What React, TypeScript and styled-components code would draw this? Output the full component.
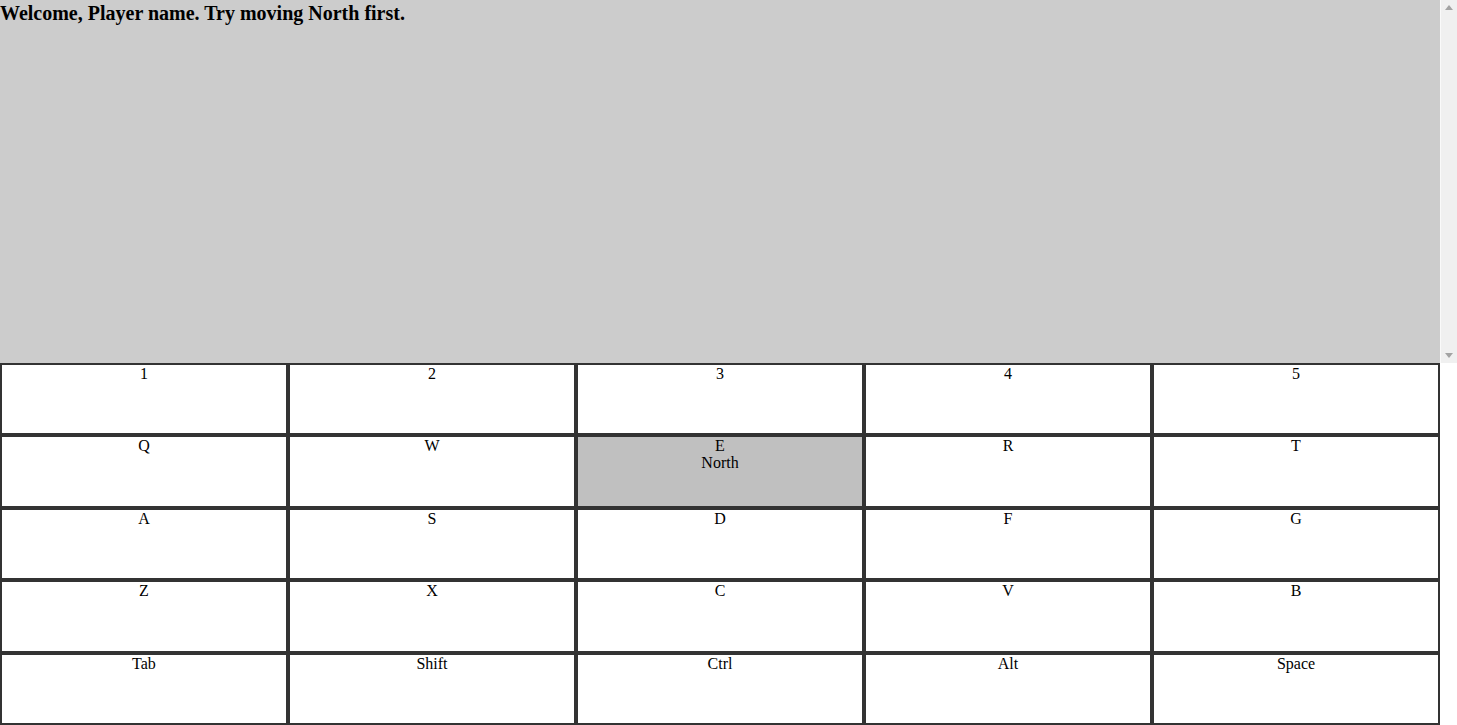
import React from "react";
import styled, { createGlobalStyle } from "styled-components";

const Global = createGlobalStyle`
  html, body { margin: 0; padding: 0; }
  body {
    font-family: "Liberation Serif", "Times New Roman", serif;
    font-size: 16px;
    color: #000;
    background: #fff;
    overflow: hidden;
  }
`;

const Page = styled.div`
  display: flex;
  flex-direction: column;
  height: 725px;
`;

const LogFrame = styled.div`
  height: 362.5px;
  display: flex;
  background: #cccccc;
`;

const Log = styled.div`
  flex: 1;
  overflow-y: auto;
`;

const Scrollbar = styled.div`
  width: 17px;
  box-sizing: border-box;
  background: #f0f0f0;
  border-left: 1px solid #fafafa;
  display: flex;
  flex-direction: column;
  justify-content: space-between;
  align-items: center;
  padding: 5px 0 5px 0;
`;

const Arrow = styled.svg`
  display: block;
  width: 8px;
  height: 5px;
  fill: #a3a3a3;
`;

const Message = styled.h3`
  margin: 0;
  padding-top: 2px;
  font-size: 20px;
  font-weight: bold;
  line-height: 23px;
`;

const Keyboard = styled.div`
  display: grid;
  grid-template-columns: repeat(5, 288px);
  grid-template-rows: repeat(5, 72.5px);
  width: 1440px;
  height: 362.5px;
`;

const Key = styled.div<{ $active?: boolean }>`
  box-sizing: border-box;
  border: 2px solid #333333;
  background: ${(p) => (p.$active ? "#c0c0c0" : "#ffffff")};
  text-align: center;
  line-height: 17px;
`;

const rows = [
  ["1", "2", "3", "4", "5"],
  ["Q", "W", "E", "R", "T"],
  ["A", "S", "D", "F", "G"],
  ["Z", "X", "C", "V", "B"],
  ["Tab", "Shift", "Ctrl", "Alt", "Space"],
];

const actions: Record<string, string> = { E: "North" };

export default function App() {
  return (
    <Page>
      <Global />
      <LogFrame>
        <Log>
          <Message>Welcome, Player name. Try moving North first.</Message>
        </Log>
        <Scrollbar>
          <Arrow viewBox="0 0 8 5">
            <polygon points="4,0 8,5 0,5" />
          </Arrow>
          <Arrow viewBox="0 0 8 5">
            <polygon points="0,0 8,0 4,5" />
          </Arrow>
        </Scrollbar>
      </LogFrame>
      <Keyboard>
        {rows.flat().map((k) => (
          <Key key={k} $active={!!actions[k]}>
            <div>{k}</div>
            {actions[k] && <div>{actions[k]}</div>}
          </Key>
        ))}
      </Keyboard>
    </Page>
  );
}
